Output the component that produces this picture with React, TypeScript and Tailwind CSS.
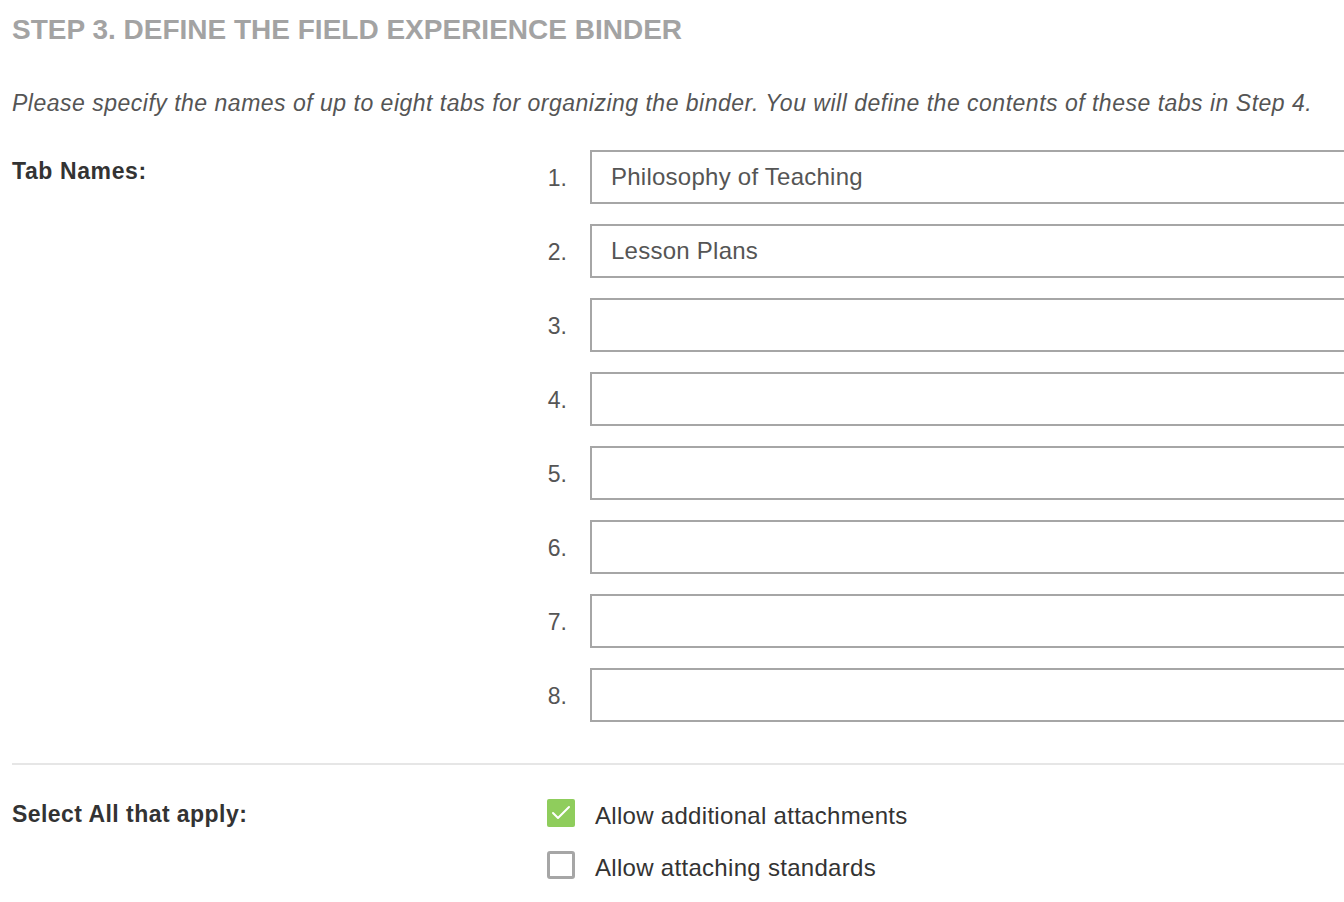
import { Check } from "lucide-react";

const tabs = ["Philosophy of Teaching", "Lesson Plans", "", "", "", "", "", ""];

export default function App() {
  return (
    <div
      className="w-[1344px] h-[902px] overflow-hidden bg-white pl-3"
      style={{ fontFamily: '"Liberation Sans", Arial, sans-serif' }}
    >
      <h1 className="pt-[14px] text-[28px] leading-[32px] font-bold text-[#a3a3a3]">
        STEP 3. DEFINE THE FIELD EXPERIENCE BINDER
      </h1>

      <p className="mt-[42px] text-[23px] leading-[30px] italic text-[#555] tracking-[0.5px] whitespace-nowrap">
        Please specify the names of up to eight tabs for organizing the binder. You will define the contents of these tabs in Step 4.
      </p>

      <div className="mt-[32px] flex">
        <div className="w-[528px] pt-[6px] text-[23px] leading-[30px] font-bold text-[#333] tracking-[0.6px]">
          Tab Names:
        </div>
        <div className="flex-1 -mr-[20px] flex flex-col gap-[20px]">
          {tabs.map((name, i) => (
            <div key={i} className="flex items-center">
              <span className="w-[27px] text-right pt-[2px] text-[23px] text-[#555]">
                {i + 1}.
              </span>
              <div className="ml-[23px] flex-1 h-[54px] border-2 border-[#a6a6a6] flex items-center px-[19px] text-[24px] text-[#555] tracking-[0.25px]">
                {name}
              </div>
            </div>
          ))}
        </div>
      </div>

      <div className="mt-[41px] h-[2px] bg-[#e6e6e6]" />

      <div className="mt-[34px] flex">
        <div className="w-[535px] text-[23px] leading-[30px] font-bold text-[#333] tracking-[0.45px]">
          Select All that apply:
        </div>
        <div className="flex flex-col gap-[24px]">
          <label className="flex items-center h-[28px]">
            <span className="w-[28px] h-[28px] rounded-[2px] bg-[#8fcd5c] flex items-center justify-center">
              <Check size={24} strokeWidth={2} color="#fff" />
            </span>
            <span className="ml-[20px] pt-[6px] text-[24px] leading-[28px] text-[#333] tracking-[0.3px]">
              Allow additional attachments
            </span>
          </label>
          <label className="flex items-center h-[28px]">
            <span className="w-[28px] h-[28px] rounded-[3px] border-[3px] border-[#a6a6a6] bg-white" />
            <span className="ml-[20px] pt-[6px] text-[24px] leading-[28px] text-[#333] tracking-[0.3px]">
              Allow attaching standards
            </span>
          </label>
        </div>
      </div>
    </div>
  );
}
